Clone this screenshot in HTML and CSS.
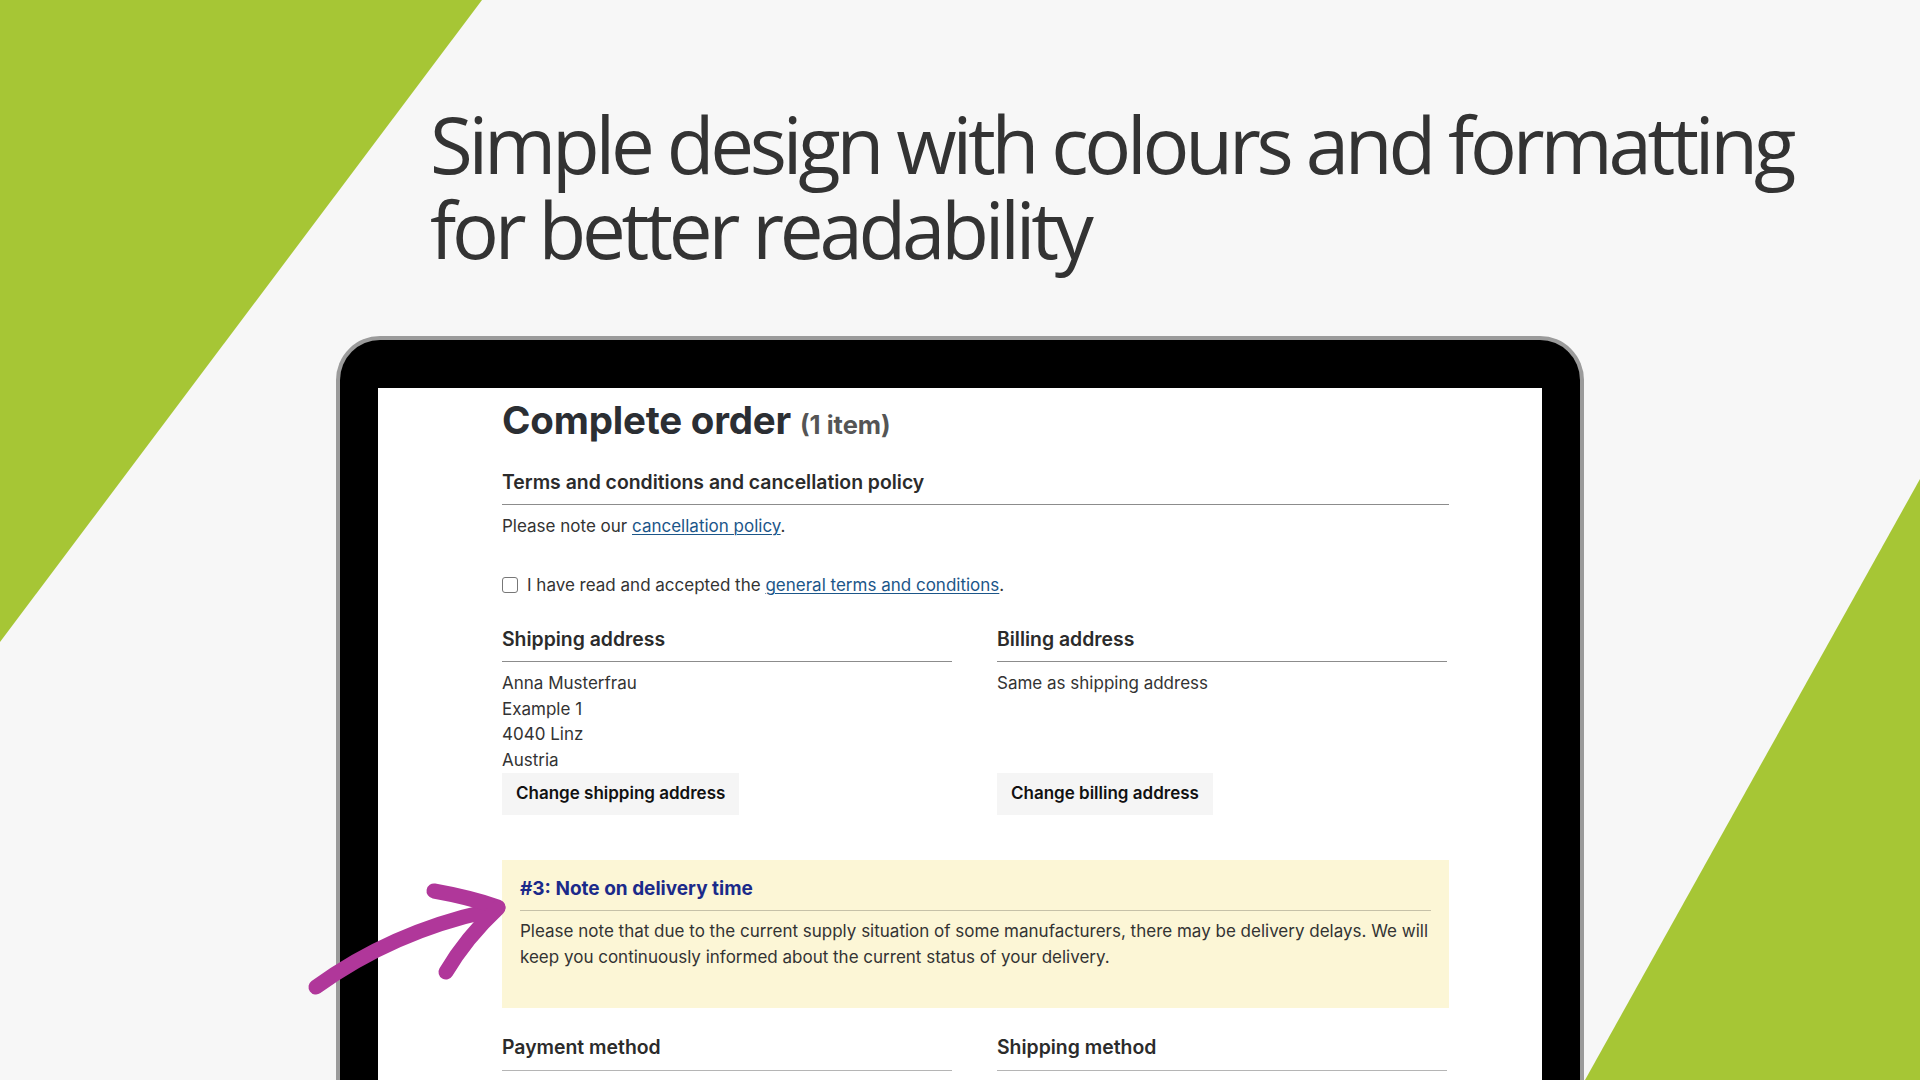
FILE: index.html
```html
<!DOCTYPE html>
<html lang="en">
<head>
<meta charset="utf-8">
<title>Complete order</title>
<link rel="stylesheet" href="styles.css">
</head>
<body>
<div class="page">
  <h2 class="title">Simple design with colours and formatting for better readability</h2>
  <div class="laptop">
    <div class="screen">
      <h1 class="order-title">Complete order <span class="count">(1 item)</span></h1>
      <section class="terms">
        <h3 class="sec-h">Terms and conditions and cancellation policy</h3>
        <p class="txt">Please note our <a class="lnk" href="#">cancellation policy</a>.</p>
        <label class="check"><span class="box"></span><span>I have read and accepted the <a class="lnk" href="#">general terms and conditions</a>.</span></label>
      </section>
      <div class="cols addr">
        <section class="col">
          <h3 class="sec-h">Shipping address</h3>
          <p class="txt lines">Anna Musterfrau<br>Example 1<br>4040 Linz<br>Austria</p>
          <button class="btn">Change shipping address</button>
        </section>
        <section class="col">
          <h3 class="sec-h">Billing address</h3>
          <p class="txt lines">Same as shipping address</p>
          <button class="btn">Change billing address</button>
        </section>
      </div>
      <div class="note">
        <h3 class="note-h">#3: Note on delivery time</h3>
        <p class="note-t">Please note that due to the current supply situation of some manufacturers, there may be delivery delays. We will keep you continuously informed about the current status of your delivery.</p>
      </div>
      <div class="cols methods">
        <section class="col"><h3 class="sec-h">Payment method</h3></section>
        <section class="col"><h3 class="sec-h">Shipping method</h3></section>
      </div>
    </div>
  </div>
  <svg class="arrow" viewBox="0 0 1920 1080" aria-hidden="true">
    <path d="M316 987 Q 392 932 488 911" />
    <path d="M434 891 Q 468 897 498 907" />
    <path d="M498 908 Q 466 938 446 972" />
  </svg>
</div>
</body>
</html>
```
FILE: styles.css
```css
* { box-sizing: border-box; }
html, body { margin: 0; padding: 0; }
body {
  width: 1920px;
  height: 1080px;
  overflow: hidden;
  background: #f7f7f7;
}
.page {
  position: relative;
  width: 1920px;
  height: 1080px;
  overflow: hidden;
  background: #f7f7f7;
}
.page::before,
.page::after {
  content: "";
  position: absolute;
  inset: 0;
  background: #a6c635;
  z-index: 0;
}
.page::before { clip-path: polygon(0 0, 482px 0, 0 642px); }
.page::after { clip-path: polygon(1920px 479px, 1920px 1080px, 1585px 1080px); }

.title {
  position: relative;
  z-index: 1;
  margin: 102px 0 0 430px;
  width: 1420px;
  font-family: "Open Sans", sans-serif;
  font-weight: 400;
  font-size: 78px;
  line-height: 85px;
  letter-spacing: -4.2px;
  color: #333333;
}

.laptop {
  position: relative;
  z-index: 1;
  margin: 64px 0 0 336px;
  width: 1248px;
  height: 800px;
  background: #000;
  border: 4px solid #9b9b9b;
  border-bottom: none;
  border-radius: 44px 44px 0 0;
  padding: 48px 38px 0 38px;
}
.screen {
  background: #ffffff;
  height: 100%;
  padding: 9px 93px 0 124px;
  font-family: Inter, "Liberation Sans", sans-serif;
  color: #333;
}
.order-title {
  margin: 0;
  font-size: 38.5px;
  line-height: 46px;
  font-weight: 700;
  color: #2b2e33;
  letter-spacing: -0.2px;
}
.count {
  font-size: 25.5px;
  color: #555;
  letter-spacing: 0;
}
.sec-h {
  margin: 0;
  font-size: 19.4px;
  line-height: 25px;
  font-weight: 600;
  color: #2b2b2b;
  padding-bottom: 9px;
  border-bottom: 1px solid #8c8c8c;
}
.terms { margin-top: 22px; }
.txt {
  margin: 9px 0 0 0;
  font-size: 17px;
  line-height: 25.6px;
  color: #333;
}
.lnk { color: #1c5689; text-decoration: underline; text-underline-offset: 2px; text-decoration-thickness: 1px; }
.check {
  display: flex;
  align-items: center;
  gap: 9px;
  margin-top: 33px;
  font-size: 17px;
  line-height: 25.6px;
  color: #333;
}
.box {
  width: 16px;
  height: 16px;
  border: 1px solid #777;
  border-radius: 3px;
  background: #fff;
  flex: none;
}
.cols {
  display: grid;
  grid-template-columns: 450px 450px;
  column-gap: 45px;
}
.addr { margin-top: 29px; }
.col { display: flex; flex-direction: column; align-items: flex-start; }
.col .sec-h { align-self: stretch; }
.lines { height: 102px; }
.btn {
  margin-top: 0;
  border: none;
  background: #f5f5f5;
  font-family: Inter, "Liberation Sans", sans-serif;
  font-size: 17px;
  line-height: 25.6px;
  font-weight: 600;
  color: #111;
  padding: 8px 14px;
  height: 42px;
}
.note {
  margin-top: 45px;
  background: #fcf6d6;
  padding: 16px 18px 38px 18px;
}
.note-h {
  margin: 0;
  font-size: 19px;
  line-height: 25px;
  font-weight: 700;
  color: #1b2a8a;
  padding-bottom: 9px;
  border-bottom: 1px solid #c6c1a8;
}
.note-t {
  margin: 8px 0 0 0;
  font-size: 17px;
  line-height: 25.6px;
  color: #333;
}
.methods { margin-top: 27px; }
.methods .sec-h { padding-bottom: 9.5px; border-bottom-color: #b5b5b5; }

.arrow {
  position: absolute;
  left: 0;
  top: 0;
  width: 1920px;
  height: 1080px;
  z-index: 2;
  pointer-events: none;
  fill: none;
  stroke: #b0379a;
  stroke-width: 15;
  stroke-linecap: round;
  stroke-linejoin: round;
}
```
